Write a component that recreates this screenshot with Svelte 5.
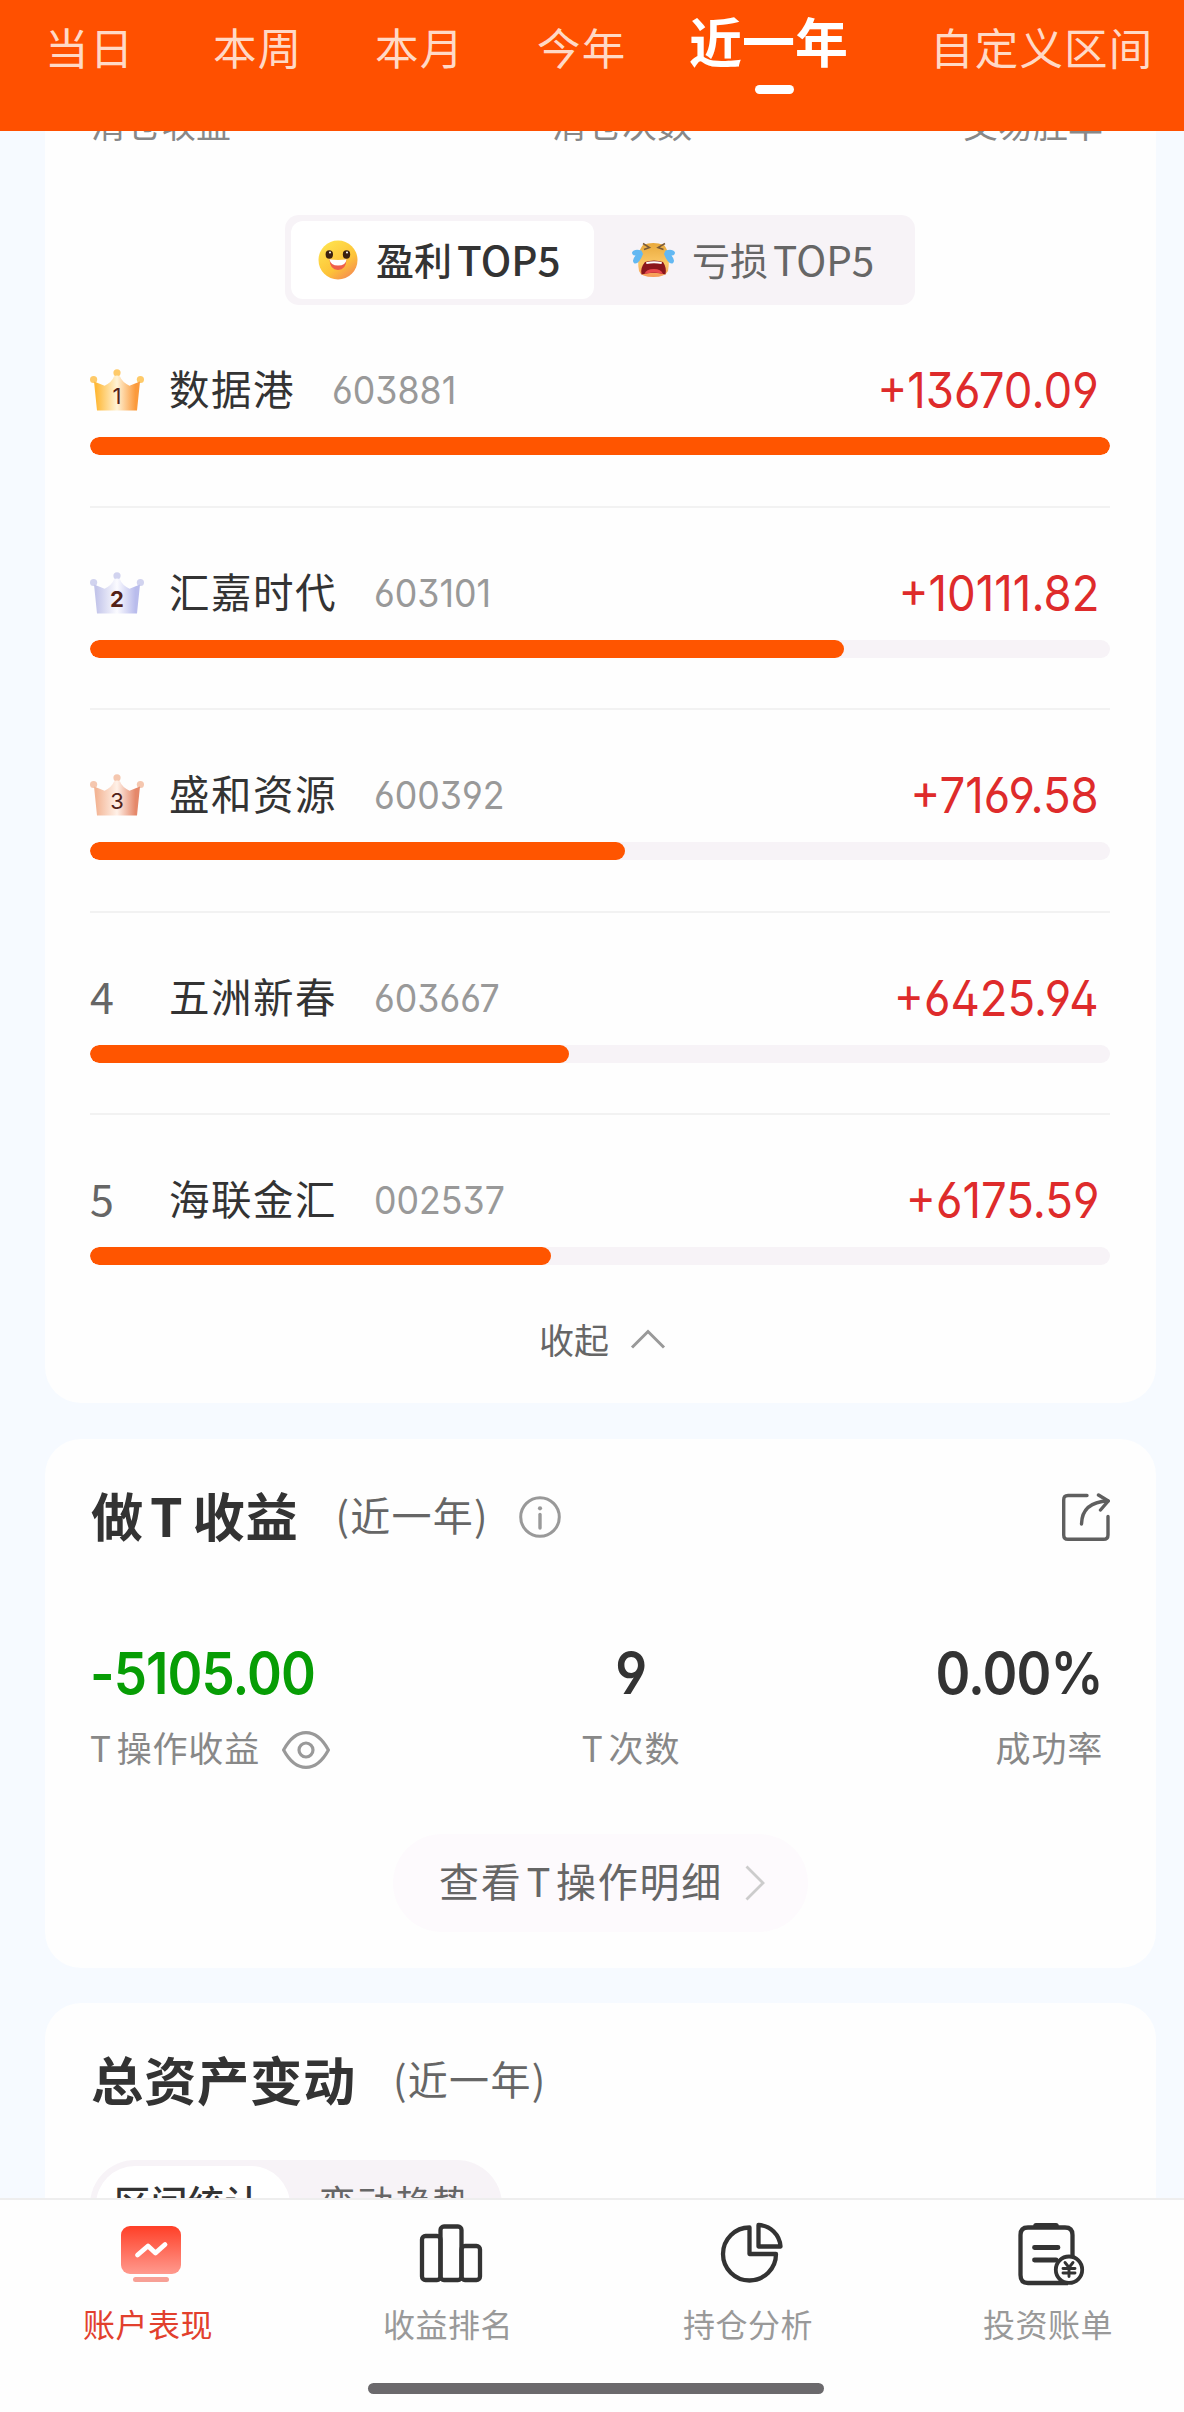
<script lang="ts">
  type Stock = { name: string; code: string; profit: number };

  const ranges = ['当日', '本周', '本月', '今年', '近一年', '自定义区间'];
  let activeRange = '近一年';
  let board: 'win' | 'loss' = 'win';

  const stocks: Stock[] = [
    { name: '数据港', code: '603881', profit: 13670.09 },
    { name: '汇嘉时代', code: '603101', profit: 10111.82 },
    { name: '盛和资源', code: '600392', profit: 7169.58 },
    { name: '五洲新春', code: '603667', profit: 6425.94 },
    { name: '海联金汇', code: '002537', profit: 6175.59 }
  ];
  const max = stocks[0].profit;

  // left, middle and right stops of each crown
  const crowns = [
    ['#ffb938', '#fff3d6', '#fb9a3c'],
    ['#c3c5ea', '#fbfbff', '#b9bcec'],
    ['#f3b595', '#fff1e8', '#e5886a']
  ];

  const navItems = ['账户表现', '收益排名', '持仓分析', '投资账单'];
  let activeNav = 0;
</script>

<div class="page">
  <header class="tabs">
    {#each ranges as range}
      <button class="tab" class:active={range === activeRange} on:click={() => (activeRange = range)}>
        {range}
      </button>
    {/each}
  </header>

  <main>
    <section class="card top-card">
      <div class="clear-labels">
        <span>清仓收益</span>
        <span class="middle">清仓次数</span>
        <span>交易胜率</span>
      </div>

      <div class="switch">
        <button class="switch-item" class:active={board === 'win'} on:click={() => (board = 'win')}>
          <svg class="face" viewBox="0 0 40 40">
            <defs>
              <linearGradient id="smile" x1="0.15" y1="0.1" x2="0.8" y2="1">
                <stop offset="0" stop-color="#ffe14d" />
                <stop offset="0.6" stop-color="#fdc338" />
                <stop offset="1" stop-color="#f58a52" />
              </linearGradient>
            </defs>
            <circle cx="20" cy="20" r="19.5" fill="url(#smile)" />
            <ellipse cx="11.3" cy="14.5" rx="3.7" ry="4.2" fill="#3b2110" />
            <ellipse cx="28.5" cy="14.5" rx="3.7" ry="4.2" fill="#3b2110" />
            <circle cx="12" cy="12.6" r="1" fill="#fff" />
            <circle cx="29" cy="12.6" r="1" fill="#fff" />
            <path d="M11.5 19.5Q20 21 28.5 19.5Q28 30 20 30Q12 30 11.5 19.5Z" fill="#ef5f4b" />
            <path d="M11.5 19.2Q20 20.6 28.5 19.2Q28 25.5 20 25.5Q12.5 25.5 11.5 19.2Z" fill="#fff" />
          </svg>
          <span>盈利</span><span class="latin">TOP5</span>
        </button>
        <button class="switch-item loss" class:active={board === 'loss'} on:click={() => (board = 'loss')}>
          <svg class="face cry" viewBox="0 0 45 36">
            <defs>
              <linearGradient id="cry" x1="0" y1="0" x2="0" y2="1">
                <stop offset="0" stop-color="#e9a93c" />
                <stop offset="0.6" stop-color="#fbc765" />
                <stop offset="1" stop-color="#f79a57" />
              </linearGradient>
            </defs>
            <path d="M12 3Q22 -1 33 3Q40 11 37 29Q34 35 22.5 35Q10 35 8 29Q5 11 12 3Z" fill="url(#cry)" />
            <path d="M14 20Q23 17 32 20Q36 26 34.5 32.5Q23 29 10.5 32.5Q9 26 14 20Z" fill="#8b151c" />
            <path d="M15 20.3Q23 18 31 20.3L30.5 22Q23 20.5 15.5 22Z" fill="#fff" />
            <path d="M13.5 32Q15 27 23 27Q30 27 32 32Q23 29 13.5 32Z" fill="#e8484c" />
            <path d="M12 1.5L18.5 5.5L13 7.5M34 1.5L27 5.5L32.5 7.5" fill="none" stroke="#7a5a3a" stroke-width="1.5" />
            <path d="M10.500 8.500Q3 6.500 1 10.500Q1 13.500 4.500 13.500Q0 19 3.500 21.500Q8 22.500 12 12Z" fill="#63b8f2" />
            <path d="M34.500 8.500Q42 6.500 44 10.500Q44 13.500 40.500 13.500Q45 19 41.500 21.500Q37 22.500 33 12Z" fill="#63b8f2" />
          </svg>
          <span>亏损</span><span class="latin">TOP5</span>
        </button>
      </div>

      <ul class="ranking">
        {#each stocks as stock, i}
          <li class="stock">
            <div class="stock-head">
              <span class="rank">
                {#if i < 3}
                  <svg class="crown" viewBox="0 0 54 42">
                    <defs>
                      <linearGradient id="crown{i}">
                        <stop offset="0.05" stop-color={crowns[i][0]} />
                        <stop offset="0.5" stop-color={crowns[i][1]} />
                        <stop offset="0.9" stop-color={crowns[i][2]} />
                      </linearGradient>
                    </defs>
                    <g fill={crowns[i][0]} opacity="0.75">
                      <circle cx="3.6" cy="10.5" r="3.6" />
                      <circle cx="27" cy="3.8" r="3.6" />
                      <circle cx="50.4" cy="10.5" r="3.6" />
                    </g>
                    <path d="M4 12.5L14.6 16.7Q22 13 24 7.5Q27 5.5 30 7.5Q32 13 39.5 16.7L50 12.5L47 41.5H7Z" fill="url(#crown{i})" />
                    <text x="27" y="34.5" text-anchor="middle" class:bold={i === 1}>{i + 1}</text>
                  </svg>
                {:else}
                  <span class="rank-number">{i + 1}</span>
                {/if}
              </span>
              <span class="name">{stock.name}</span>
              <span class="code">{stock.code}</span>
              <span class="profit">+{stock.profit.toFixed(2)}</span>
            </div>
            <div class="track">
              <div class="fill" style="width: {(stock.profit / max) * 100}%"></div>
            </div>
          </li>
        {/each}
      </ul>

      <button class="collapse">
        收起
        <svg width="36" height="20" viewBox="0 0 36 20">
          <path d="M2 18.5L18 2.5L34 18.5" fill="none" stroke="#999" stroke-width="3" />
        </svg>
      </button>
    </section>

    <section class="card">
      <div class="card-head">
        <h2>做<span class="title-t">T</span>收益</h2>
        <span class="period">(近一年)</span>
        <svg class="info" viewBox="0 0 42 42" fill="none" stroke="#999" stroke-width="3">
          <circle cx="21" cy="21" r="19.3" />
          <path d="M21 18.5V32" stroke-width="3.4" stroke-linecap="round" />
          <circle cx="21" cy="12.3" r="2.1" fill="#999" stroke="none" />
        </svg>
        <svg class="share" viewBox="0 0 48 48" fill="none" stroke="#5f5f5f" stroke-width="3.4" stroke-linecap="round" stroke-linejoin="round">
          <path d="M25 2.500H6Q1.700 2.500 1.700 7V42Q1.700 46.300 6 46.300H41.500Q46 46.300 46 42V23.500" />
          <path d="M19.500 31Q20 9 46 8" />
          <path d="M36.500 2L46.300 8L38.500 17" />
        </svg>
      </div>

      <div class="stats">
        <div class="stat">
          <b class="green">-5105.00</b>
          <span class="label">
            <i>T</i>操作收益
            <svg class="eye" viewBox="0 0 48 38" fill="none" stroke="#999" stroke-width="3.2">
              <path d="M1.6 19Q11 1.6 24 1.6T46.400 19Q37 36.400 24 36.400T1.600 19Z" stroke-linejoin="round" />
              <circle cx="24" cy="19" r="7" />
            </svg>
          </span>
        </div>
        <div class="stat center">
          <b>9</b>
          <span class="label"><i>T</i>次数</span>
        </div>
        <div class="stat right">
          <b>0.00%</b>
          <span class="label">成功率</span>
        </div>
      </div>

      <button class="detail">
        <span>查看<i>T</i>操作明细</span>
        <svg width="20" height="36" viewBox="0 0 20 36">
          <path d="M1.5 1.5L18 18L1.5 34.5" fill="none" stroke="#ccc" stroke-width="2.8" />
        </svg>
      </button>
    </section>

    <section class="card">
      <div class="card-head">
        <h2>总资产变动</h2>
        <span class="period">(近一年)</span>
      </div>
      <div class="pill">
        <span class="pill-item active">区间统计</span>
        <span class="pill-item">变动趋势</span>
      </div>
    </section>
  </main>

  <nav>
    <div class="nav-items">
      {#each navItems as item, i}
        <button class="nav-item" class:active={i === activeNav} on:click={() => (activeNav = i)}>
          <svg class="nav-icon" viewBox="0 0 68 64" fill="none" stroke="#333" stroke-width="4.3" stroke-linejoin="round">
            {#if i === 0}
              <defs>
                <linearGradient id="screen" x1="0" y1="0" x2="0" y2="1">
                  <stop offset="0" stop-color="#ff3f27" />
                  <stop offset="1" stop-color="#ff9a8e" />
                </linearGradient>
              </defs>
              <rect x="4" y="4" width="60" height="48" rx="9" fill="url(#screen)" stroke="none" />
              <path d="M20.5 33L31 24L38.5 31L48 22.5" stroke="#fff" stroke-width="4.8" stroke-linecap="round" />
              <rect x="16" y="55" width="36" height="5" rx="2.5" fill="#f7a096" stroke="none" />
            {:else if i === 1}
              <rect x="5" y="14" width="18.500" height="44" rx="3.5" />
              <rect x="23.500" y="4.500" width="21" height="53.500" rx="3.5" />
              <rect x="44.500" y="24" width="18.500" height="34" rx="3.5" />
            {:else if i === 2}
              <path d="M32.500 5.500A26.500 26.500 0 1 0 59 32H32.500Z" />
              <path d="M41.500 3A23 23 0 0 1 63.500 24.500H41.500Z" />
            {:else}
              <path d="M55.500 35V13Q55.500 5.500 48 5.500H11Q3.500 5.500 3.500 13V53Q3.500 61 11 61H51" />
              <path d="M19 3.800H39" stroke-width="5.500" stroke-linecap="round" />
              <path d="M17.500 25.500H41M17.500 38H39" stroke-width="4.800" stroke-linecap="round" />
              <circle cx="52" cy="47.700" r="13.200" fill="#fefefe" stroke-width="3.800" />
              <path d="M48 40.500L52 45.500L56 40.500M52 45.500V54.500M46 46.500H58M46 51H58" stroke-width="2.900" stroke-linecap="round" />
            {/if}
          </svg>
          <span>{item}</span>
        </button>
      {/each}
    </div>
    <div class="home-bar"></div>
  </nav>
</div>

<style>
  :global(body) {
    margin: 0;
  }

  .page {
    display: flex;
    flex-direction: column;
    width: 1184px;
    height: 2412px;
    overflow: hidden;
    background: #f6faff;
    color: #333;
    font-family: 'Noto Sans CJK SC', 'Noto Sans', sans-serif;
  }

  button {
    padding: 0;
    border: 0;
    background: none;
    color: inherit;
    font: inherit;
    white-space: nowrap;
  }

  i {
    font-style: normal;
  }

  svg {
    flex-shrink: 0;
  }

  .tabs {
    display: grid;
    grid-template-columns: 168px 162px 162px 152px 241px auto;
    flex-shrink: 0;
    align-items: start;
    box-sizing: border-box;
    height: 131px;
    padding-left: 45px;
    background: #ff5000;
  }

  .tab {
    position: relative;
    padding-top: 17px;
    font-size: 43.5px;
    line-height: 60px;
    letter-spacing: 1.2px;
    text-align: left;
    color: #ffd9c6;
  }

  .tab.active {
    padding-top: 10px;
    font-size: 53px;
    font-weight: 700;
    letter-spacing: 0;
    color: #fff;
  }

  .tab.active::after {
    content: '';
    position: absolute;
    top: 85px;
    left: 66px;
    width: 39px;
    height: 9px;
    border-radius: 5px;
    background: #fff;
  }

  main {
    display: flex;
    flex: 1;
    flex-direction: column;
    gap: 35.5px;
    min-height: 0;
    padding: 0 28px 0 45px;
    overflow: hidden;
  }

  .card {
    flex-shrink: 0;
    box-sizing: border-box;
    padding: 46px 46px 36px 45px;
    border-radius: 36px;
    background: #fefefe;
  }

  .top-card {
    margin-top: -28px;
    padding-top: 0;
    padding-bottom: 44px;
    border-radius: 0 0 36px 36px;
  }

  .clear-labels {
    display: flex;
    justify-content: space-between;
    padding: 0 7px 0 1px;
    font-size: 35px;
    line-height: 40px;
    color: #888;
  }

  .clear-labels .middle {
    padding-left: 50px;
  }

  .switch {
    display: flex;
    box-sizing: border-box;
    width: 630px;
    height: 90px;
    margin: 72px 0 0 195px;
    padding: 6px;
    border-radius: 14px;
    background: #f7f3f7;
  }

  .switch-item {
    display: flex;
    align-items: center;
    width: 303px;
    padding-left: 27px;
    border-radius: 12px;
    font-size: 38px;
    color: #666;
  }

  .switch-item.active {
    background: #fff;
    font-weight: 500;
    color: #333;
  }

  .switch-item.loss {
    padding-left: 37px;
  }

  .switch-item span {
    padding-bottom: 4px;
  }

  .switch-item .latin {
    margin-left: 5px;
    font-size: 40.5px;
  }

  .face {
    width: 40px;
    height: 40px;
    margin-right: 18px;
  }

  .face.cry {
    width: 45px;
    height: 36px;
    margin-right: 16px;
  }

  .ranking {
    margin: 0;
    padding: 0;
    list-style: none;
  }

  .stock {
    box-sizing: border-box;
    height: 202.5px;
    padding-top: 60px;
    border-bottom: 2px solid #f2f2f2;
  }

  .stock:last-child {
    height: 150px;
    border-bottom: 0;
  }

  .stock-head {
    display: flex;
    align-items: center;
    height: 50px;
  }

  .rank {
    display: flex;
    width: 79px;
    font-size: 43px;
    line-height: 50px;
    color: #666;
  }

  .rank-number {
    padding-bottom: 6px;
  }

  .crown {
    width: 54px;
    height: 42px;
  }

  .crown text {
    font-family: Inter, sans-serif;
    font-size: 22px;
    fill: #532218;
  }

  .crown .bold {
    font-weight: 700;
  }

  .name {
    padding-bottom: 4px;
    font-size: 40.5px;
    line-height: 50px;
    letter-spacing: 1.5px;
  }

  .code {
    margin-left: 37px;
    font-family: Inter, sans-serif;
    font-size: 38px;
    font-feature-settings: 'ss01';
    color: #999;
    transform: scaleX(0.94);
    transform-origin: left;
  }

  .profit {
    margin-left: auto;
    padding-right: 12px;
    font-family: Inter, sans-serif;
    font-size: 49.5px;
    font-feature-settings: 'ss01';
    color: #de2b2b;
    transform: scaleX(0.92);
    transform-origin: right;
  }

  .track {
    height: 18px;
    margin-top: 22px;
    overflow: hidden;
    border-radius: 9px;
    background: #f7f3f7;
  }

  .fill {
    height: 100%;
    border-radius: 9px;
    background: #ff5500;
  }

  .collapse {
    display: flex;
    align-items: center;
    gap: 21px;
    height: 40px;
    margin: 54px 0 0 449px;
    font-size: 35px;
    line-height: 40px;
    color: #666;
  }

  .card-head {
    display: flex;
    align-items: center;
    height: 58px;
    padding-bottom: 2px;
  }

  h2 {
    margin: 0 0 0 1px;
    font-size: 52.3px;
    font-weight: 700;
    line-height: 60px;
    letter-spacing: 0.7px;
  }

  .title-t {
    margin: 0 9px 0 6px;
  }

  .period {
    margin-left: 37px;
    font-size: 40px;
    line-height: 60px;
    letter-spacing: 1.3px;
    color: #666;
  }

  .info {
    width: 42px;
    height: 42px;
    margin: 6px 0 0 30px;
  }

  .share {
    width: 48px;
    height: 48px;
    margin: 6px 0 0 auto;
  }

  .stats {
    display: grid;
    grid-template-columns: 471px 140px 1fr;
    margin-top: 98px;
  }

  .stat {
    display: flex;
    flex-direction: column;
    gap: 24px;
  }

  .stat b {
    font-family: Inter, sans-serif;
    font-size: 57.5px;
    font-weight: 600;
    font-feature-settings: 'ss01';
    line-height: 60px;
    letter-spacing: -1px;
    transform: scaleX(0.92);
    transform-origin: left;
  }

  .stat .green {
    color: #079d05;
  }

  .label {
    display: flex;
    align-items: center;
    height: 40px;
    font-size: 35px;
    letter-spacing: 0.8px;
    line-height: 40px;
    color: #888;
  }

  .label i {
    margin-right: 5px;
  }

  .eye {
    width: 48px;
    height: 38px;
    margin: 6px 0 0 22px;
  }

  .stat.center {
    align-items: center;
  }

  .stat.center b {
    transform-origin: center;
  }

  .stat.right {
    align-items: flex-end;
    padding-right: 7px;
  }

  .stat.right b {
    transform-origin: right;
  }

  .detail {
    display: flex;
    align-items: center;
    justify-content: space-between;
    box-sizing: border-box;
    width: 415px;
    height: 98px;
    margin: 67px 0 0 303px;
    padding: 0 43px 0 46px;
    border-radius: 49px;
    background: #fdfafd;
    font-size: 40px;
    letter-spacing: 1.7px;
    color: #666;
  }

  .detail span {
    padding-bottom: 5px;
  }

  .detail i {
    margin: 0 4px;
  }

  .pill {
    display: flex;
    box-sizing: border-box;
    width: 412px;
    height: 90px;
    margin-top: 51px;
    padding: 6px;
    border-radius: 45px;
    background: #f7f3f7;
  }

  .pill-item {
    flex-shrink: 0;
    box-sizing: border-box;
    width: 206px;
    padding-left: 29px;
    font-size: 36.5px;
    line-height: 71px;
    letter-spacing: 1.3px;
    color: #666;
  }

  .pill-item.active {
    width: 194px;
    padding-left: 18px;
    border-radius: 39px;
    background: #fff;
    font-weight: 500;
    letter-spacing: 0.3px;
    color: #333;
  }

  nav {
    flex-shrink: 0;
    box-sizing: border-box;
    height: 214px;
    border-top: 2px solid #eee;
    background: #fefefe;
  }

  .nav-items {
    display: grid;
    grid-template-columns: repeat(4, 130px);
    column-gap: 170px;
    padding: 22px 0 0 83px;
  }

  .nav-item {
    display: flex;
    flex-direction: column;
    align-items: center;
    gap: 17px;
    font-size: 32px;
    line-height: 40px;
    letter-spacing: 0.5px;
    color: #999;
  }

  .nav-item.active {
    color: #e2402d;
  }

  .nav-icon {
    width: 68px;
    height: 64px;
    margin-left: 5px;
  }

  .home-bar {
    width: 456px;
    height: 11px;
    margin: 40px 0 0 368px;
    border-radius: 6px;
    background: #6b696c;
  }
</style>
